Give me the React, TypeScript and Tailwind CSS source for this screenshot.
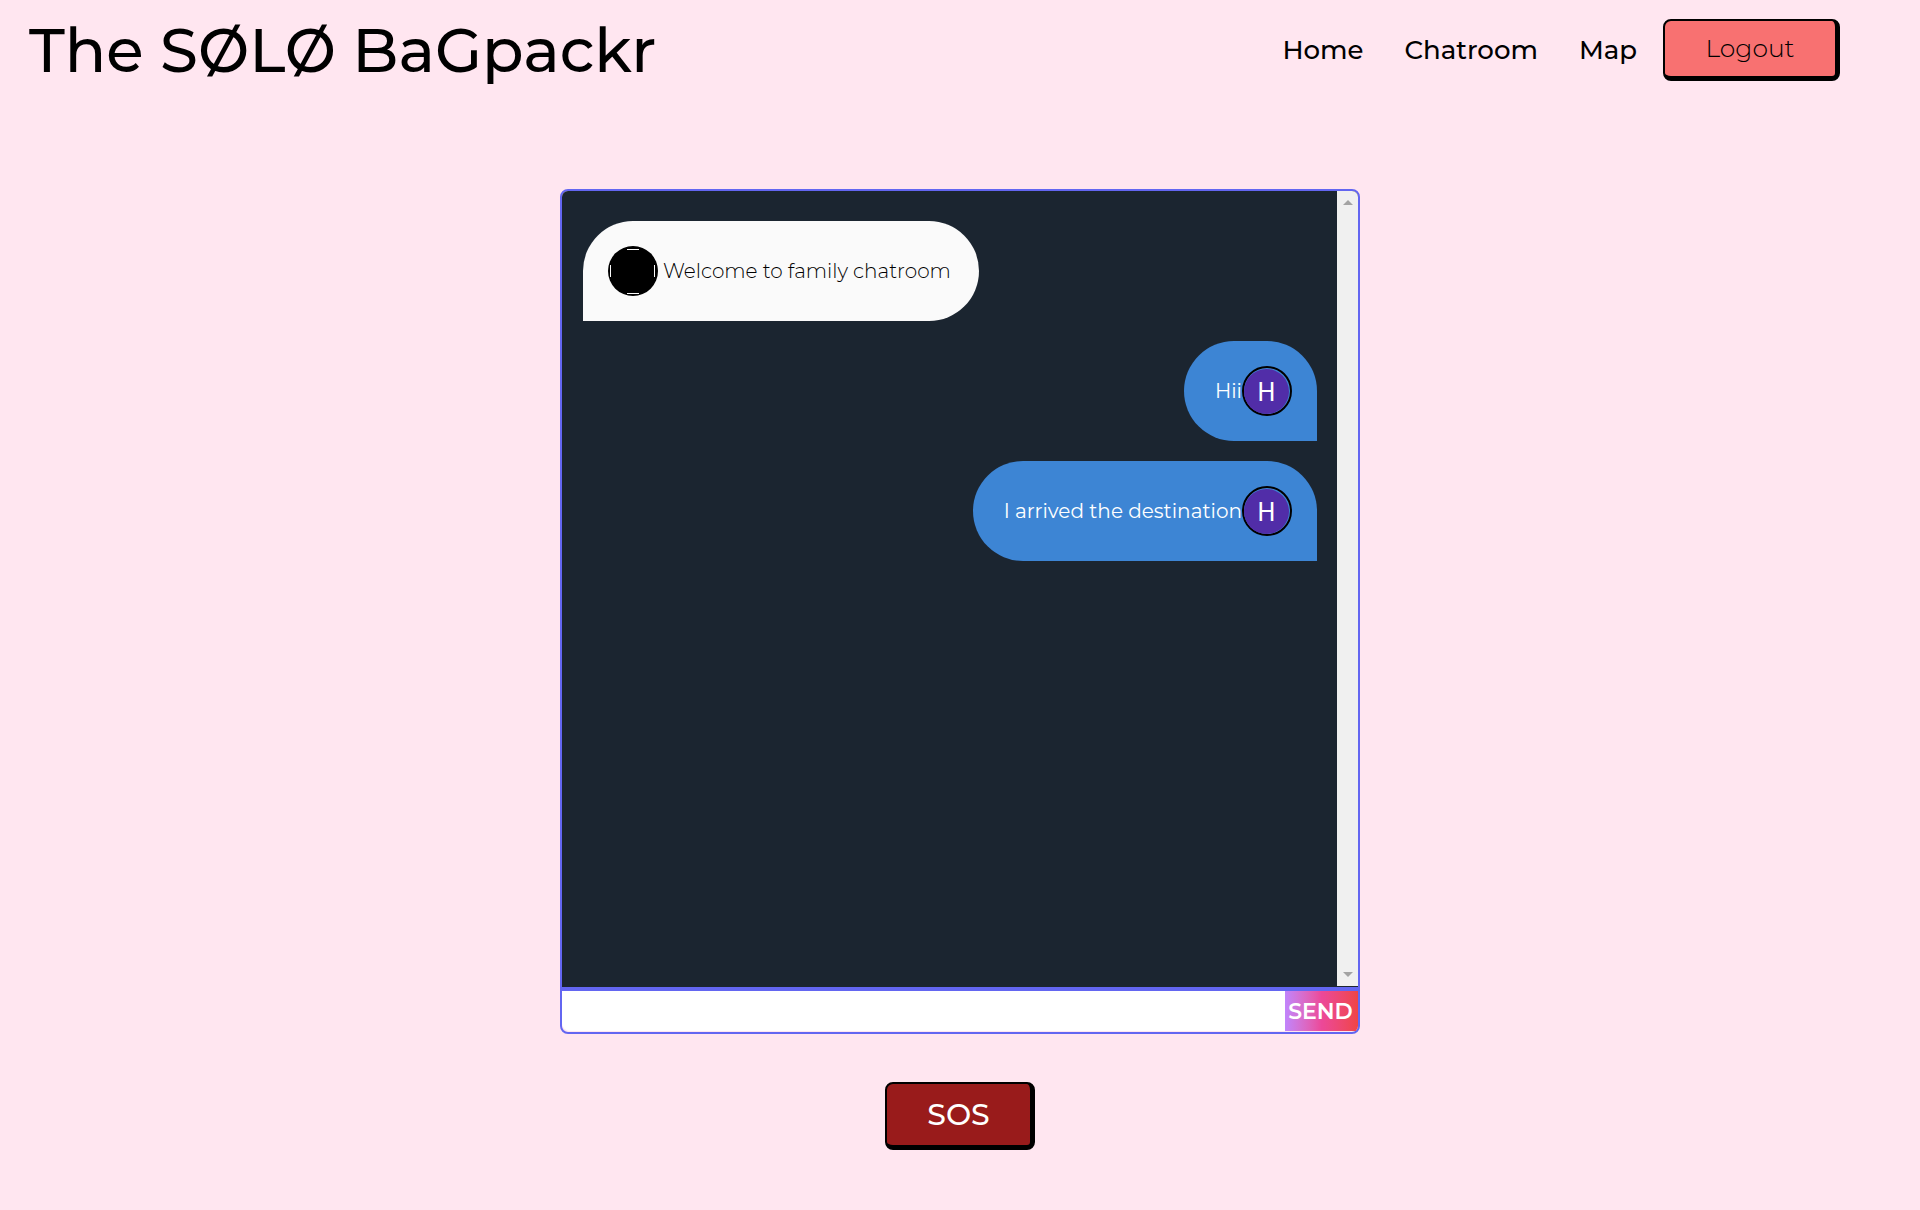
import React, { useState } from "react";

type Message = {
  id: number;
  text: string;
  mine: boolean;
};

const messages: Message[] = [
  { id: 1, text: "Welcome to family chatroom", mine: false },
  { id: 2, text: "Hii", mine: true },
  { id: 3, text: "I arrived the destination", mine: true },
];

function Header() {
  return (
    <header className="flex h-[100px] items-center justify-between pl-[29px] pr-20">
      <h1 className="text-[61px] leading-none font-medium">The SØLØ BaGpackr</h1>
      <nav className="flex items-center">
        <ul className="flex items-center gap-[41px] pr-[26px] text-[26px] font-medium">
          <li><a href="#home">Home</a></li>
          <li><a href="#chatroom">Chatroom</a></li>
          <li><a href="#map">Map</a></li>
        </ul>
        <button className="h-[62px] w-[177px] rounded-lg border-2 border-r-[5px] border-b-[5px] border-black bg-[#f87171] text-[25px] font-light">
          Logout
        </button>
      </nav>
    </header>
  );
}

function Avatar({ mine }: { mine: boolean }) {
  if (!mine) {
    return (
      <svg className="size-[50px] shrink-0" viewBox="0 0 50 50" aria-hidden="true">
        <circle cx="25" cy="25" r="25" fill="#000" />
        <path d="M19 3.5h12M19 47.5h12M2.5 19v12M46.5 19v12" stroke="#fafafa" strokeWidth="1" />
      </svg>
    );
  }
  return (
    <span className="flex size-[50px] shrink-0 rounded-full border-2 border-black pt-px">
      <span className="flex size-[45px] items-center justify-center rounded-full bg-[#512da8] pt-0.5 font-[Roboto] text-[25px] text-white">
        H
      </span>
    </span>
  );
}

function Bubble({ message }: { message: Message }) {
  if (message.mine) {
    return (
      <li className="flex h-[100px] items-center self-end rounded-[50px] rounded-br-none bg-[#3d85d4] pr-[25px] pl-[31px] text-xl text-white">
        <span>{message.text}</span>
        <Avatar mine />
      </li>
    );
  }
  return (
    <li className="flex h-[100px] items-center gap-[5px] self-start rounded-[50px] rounded-bl-none bg-[#fafafa] pr-7 pl-[25px] text-xl font-light">
      <Avatar mine={false} />
      <span>{message.text}</span>
    </li>
  );
}

function ScrollTrack() {
  return (
    <div className="mb-px flex w-[21px] flex-col items-center justify-between bg-[#f0f0f0] py-2" aria-hidden="true">
      <svg className="h-2 w-2.5" viewBox="0 0 10 8"><path d="M0 6 5 1l5 5z" fill="#a3a3a3" /></svg>
      <svg className="h-2 w-2.5" viewBox="0 0 10 8"><path d="M0 2 5 7l5-5z" fill="#a3a3a3" /></svg>
    </div>
  );
}

function ChatBox() {
  const [input, setInput] = useState("");

  return (
    <section className="w-full max-w-[800px] overflow-hidden rounded-lg border-2 border-[#6366f1]">
      <div className="flex min-h-[796px] bg-[#1b2530]">
        <ul className="flex flex-1 flex-col gap-5 px-5 pt-[30px] pl-[21px]">
          {messages.map((m) => (
            <Bubble key={m.id} message={m} />
          ))}
        </ul>
        <ScrollTrack />
      </div>
      <form className="flex h-[45px] border-t-4 border-[#6366f1] pb-px" onSubmit={(e) => e.preventDefault()}>
        <input
          type="text"
          aria-label="Message"
          value={input}
          onChange={(e) => setInput(e.target.value)}
          className="min-w-0 flex-1 rounded-bl-lg bg-white px-3 text-xl outline-none"
        />
        <button type="submit" className="w-[73px] bg-linear-to-r from-[#c084fc] via-[#ec4899] to-[#ef4444] pr-0.5 text-[22px] font-semibold text-white">
          SEND
        </button>
      </form>
    </section>
  );
}

export default function App() {
  return (
    <div className="min-h-screen bg-[#ffe6f0] font-['Montserrat','Inter',sans-serif] text-black">
      <Header />
      <main className="flex flex-col items-center gap-12 px-4 pt-[89px] pb-12">
        <ChatBox />
        <button className="h-[68px] w-[150px] rounded-lg border-2 border-r-[5px] border-b-[5px] border-black bg-[#991b1b] text-[30px] font-medium text-white">
          SOS
        </button>
      </main>
    </div>
  );
}
